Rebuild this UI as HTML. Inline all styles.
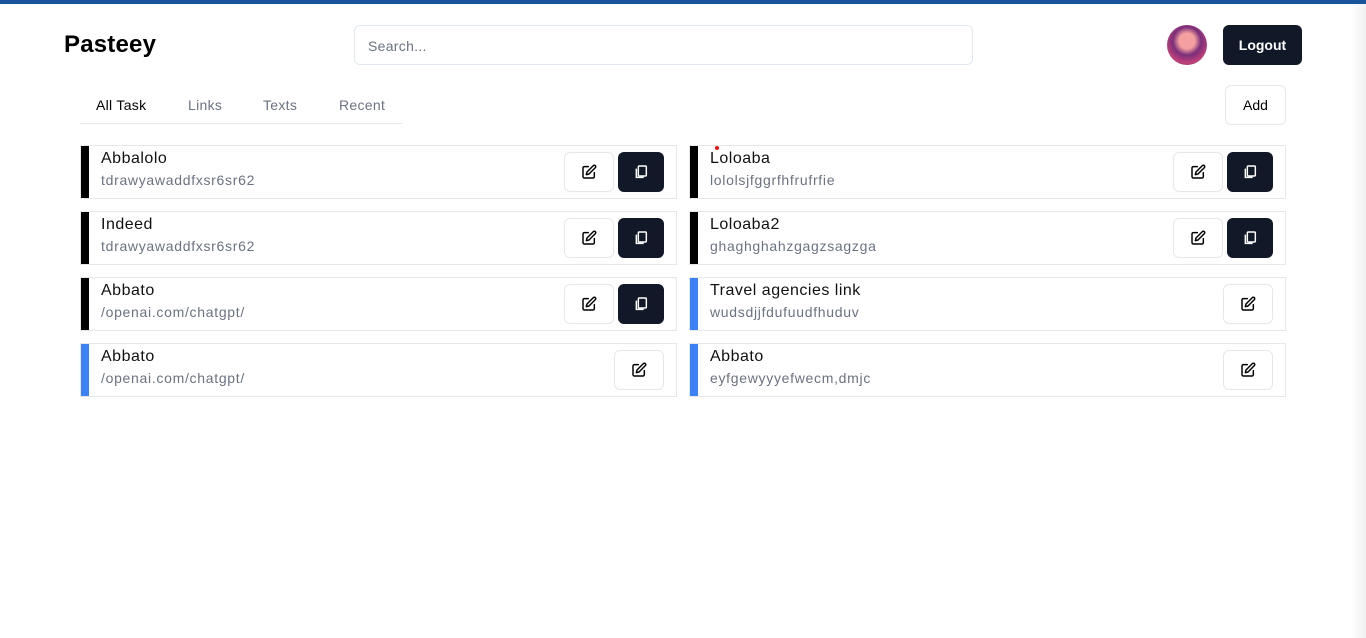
<!DOCTYPE html>
<html><head><style>
*{box-sizing:border-box;margin:0;padding:0}
body{width:1366px;height:638px;overflow:hidden;background:#fff;font-family:"Liberation Sans",sans-serif;position:relative}
.top{position:absolute;left:0;top:0;width:1366px;height:4px;background:#1a559a}
.sb{position:absolute;right:0;top:4px;width:16px;height:634px;background:linear-gradient(90deg,#fff,#f1f1f1)}
.logo{position:absolute;left:64px;top:31px;font-size:24px;font-weight:bold;color:#000;letter-spacing:0.2px}
.search{position:absolute;left:354px;top:25px;width:619px;height:40px;border:1px solid #e2e8f0;border-radius:6px;padding-left:13px;line-height:40px;font-size:14px;color:#6b7280;letter-spacing:0.3px}
.av{position:absolute;left:1167px;top:25px;width:40px;height:40px;border-radius:50%;background:radial-gradient(circle at 50% 40%,#f4a0a0 0 25%,#7a2e7a 45%,#c0407a 70%,#3a2a6a)}
.logout{position:absolute;left:1223px;top:25px;width:79px;height:40px;border-radius:6px;background:#111827;color:#fff;font-size:14px;font-weight:bold;text-align:center;line-height:40px}
.tabs{position:absolute;left:80px;top:85px;width:322px;height:39px;border-bottom:1px solid #e5e7eb;font-size:14px;color:#6b7280;letter-spacing:0.3px}
.tabs span{position:absolute;top:12px}
.add{position:absolute;left:1225px;top:85px;width:61px;height:40px;border:1px solid #e5e7eb;border-radius:6px;text-align:center;line-height:38px;font-size:14px;color:#000}
.card{position:absolute;width:597px;height:54px;border:1px solid #e5e7eb}
.card::before{content:"";position:absolute;left:0;top:0;width:8px;height:52px;background:#000}
.card.b::before{background:#3b82f6}
.t{position:absolute;left:20px;top:4px;font-size:16px;color:#111;letter-spacing:0.5px}
.s{position:absolute;left:20px;top:26px;font-size:14px;color:#6b7280;letter-spacing:0.7px}
.btn{position:absolute;top:6px;width:50px;height:40px;border:1px solid #e5e7eb;border-radius:6px;display:flex;align-items:center;justify-content:center}
.btn.d{background:#111827;border-color:#111827;width:46px}
</style></head><body>
<div class="top"></div><div class="sb"></div>
<div class="logo">Pasteey</div>
<div class="search">Search...</div>
<div class="av"></div>
<div class="logout">Logout</div>
<div class="tabs"><span style="left:16px;color:#000">All Task</span><span style="left:108px">Links</span><span style="left:183px">Texts</span><span style="left:259px">Recent</span></div>
<div class="add">Add</div>
<svg width="0" height="0" style="position:absolute"><defs>
<symbol id="e" viewBox="0 0 24 24"><path d="M11 4H5a2 2 0 0 0-2 2v13a2 2 0 0 0 2 2h13a2 2 0 0 0 2-2v-6" fill="none" stroke="#000" stroke-width="2.2" stroke-linecap="round"/><path d="M18.5 2.5a2.1 2.1 0 0 1 3 3L12 15l-4 1 1-4z" fill="none" stroke="#000" stroke-width="2.2" stroke-linejoin="round"/></symbol>
<symbol id="c" viewBox="0 0 24 24"><rect x="8" y="3" width="12" height="15" rx="1.5" fill="none" stroke="#fff" stroke-width="2.2"/><path d="M5 7v13h11" fill="none" stroke="#fff" stroke-width="2.2"/></symbol>
</defs></svg>
<div class="card" style="left:80px;top:145px"><div class="t">Abbalolo</div><div class="s">tdrawyawaddfxsr6sr62</div><div class="btn" style="left:483px"><svg width="16" height="16"><use href="#e"/></svg></div><div class="btn d" style="left:537px"><svg width="16" height="16"><use href="#c"/></svg></div></div>
<div class="card" style="left:80px;top:211px"><div class="t">Indeed</div><div class="s">tdrawyawaddfxsr6sr62</div><div class="btn" style="left:483px"><svg width="16" height="16"><use href="#e"/></svg></div><div class="btn d" style="left:537px"><svg width="16" height="16"><use href="#c"/></svg></div></div>
<div class="card" style="left:80px;top:277px"><div class="t">Abbato</div><div class="s">/openai.com/chatgpt/</div><div class="btn" style="left:483px"><svg width="16" height="16"><use href="#e"/></svg></div><div class="btn d" style="left:537px"><svg width="16" height="16"><use href="#c"/></svg></div></div>
<div class="card b" style="left:80px;top:343px"><div class="t">Abbato</div><div class="s">/openai.com/chatgpt/</div><div class="btn" style="left:533px"><svg width="16" height="16"><use href="#e"/></svg></div></div>
<div class="card" style="left:689px;top:145px"><div class="t">Loloaba</div><div class="s">lololsjfggrfhfrufrfie</div><div class="btn" style="left:483px"><svg width="16" height="16"><use href="#e"/></svg></div><div class="btn d" style="left:537px"><svg width="16" height="16"><use href="#c"/></svg></div></div>
<div style="position:absolute;left:715px;top:146px;width:4px;height:4px;border-radius:50%;background:#e11"></div>
<div class="card" style="left:689px;top:211px"><div class="t">Loloaba2</div><div class="s">ghaghghahzgagzsagzga</div><div class="btn" style="left:483px"><svg width="16" height="16"><use href="#e"/></svg></div><div class="btn d" style="left:537px"><svg width="16" height="16"><use href="#c"/></svg></div></div>
<div class="card b" style="left:689px;top:277px"><div class="t">Travel agencies link</div><div class="s">wudsdjjfdufuudfhuduv</div><div class="btn" style="left:533px"><svg width="16" height="16"><use href="#e"/></svg></div></div>
<div class="card b" style="left:689px;top:343px"><div class="t">Abbato</div><div class="s">eyfgewyyyefwecm,dmjc</div><div class="btn" style="left:533px"><svg width="16" height="16"><use href="#e"/></svg></div></div>
</body></html>
